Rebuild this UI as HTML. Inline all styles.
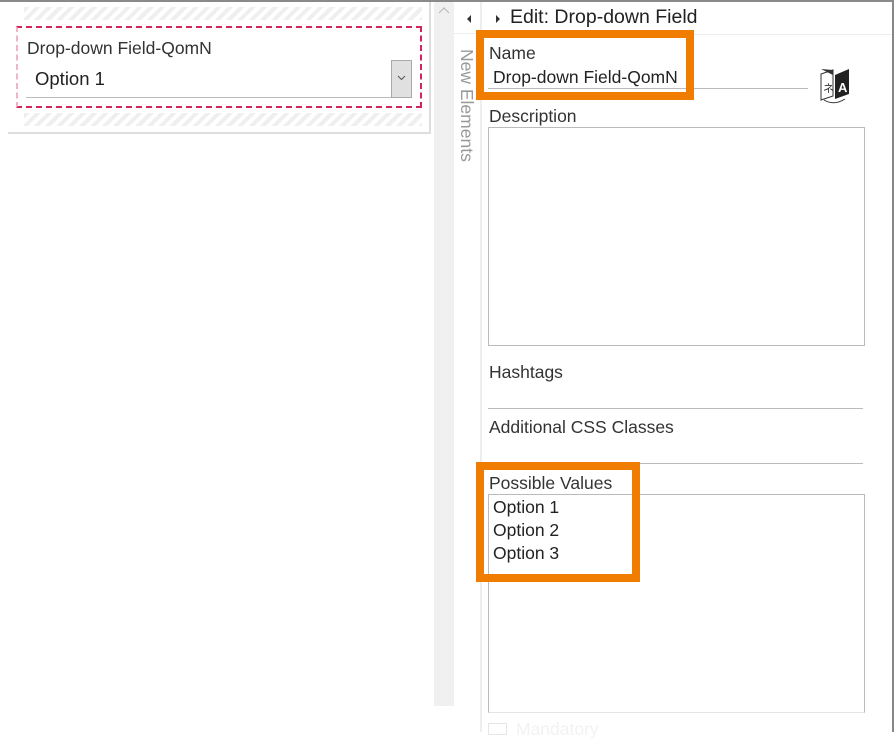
<!DOCTYPE html>
<html><head><meta charset="utf-8"><style>
*{margin:0;padding:0;box-sizing:border-box}
body{width:894px;height:732px;background:#fff;position:relative;overflow:hidden;font-family:"Liberation Sans",sans-serif;color:#333}
.a{position:absolute}
.stripe{background:repeating-linear-gradient(135deg,#efefef 0 4px,#fff 4px 8px)}
.lbl{font-size:17.5px;color:#333}
</style></head><body>
<div class="a" style="left:0;top:0;width:894px;height:2px;background:#8a8a8a"></div>
<!-- left panel -->
<div class="a" style="left:8px;top:2px;width:423px;height:132px;border-right:2px solid #ddd;border-bottom:2px solid #ddd"></div>
<div class="a stripe" style="left:24px;top:7px;width:398px;height:13px"></div>
<div class="a stripe" style="left:24px;top:113px;width:398px;height:13px"></div>
<div class="a" style="left:16px;top:26px;width:406px;height:82px;border:2px dashed #d3255a;border-left-color:#f0b6c6"></div>
<div class="a lbl" style="left:27px;top:38px">Drop-down Field-QomN</div>
<div class="a" style="left:35px;top:68px;font-size:18.5px;color:#222">Option 1</div>
<div class="a" style="left:26px;top:97px;width:386px;height:1px;background:#bbb"></div>
<div class="a" style="left:391px;top:60px;width:21px;height:38px;background:#e0e0e0;border:1px solid #aaa"></div>
<svg class="a" style="left:396px;top:74px" width="11" height="8"><path d="M2 2 L5.5 5.5 L9 2" fill="none" stroke="#555" stroke-width="1"/></svg>
<!-- scroll column -->
<div class="a" style="left:434px;top:2px;width:20px;height:704px;background:#f0f0f0"></div>
<svg class="a" style="left:438px;top:6px" width="12" height="8"><path d="M1 7 L6 2 L11 7" fill="none" stroke="#bbb" stroke-width="1.2"/></svg>
<div class="a" style="left:454px;top:2px;width:27px;height:32px;border-bottom:1px solid #eee"></div>
<svg class="a" style="left:466px;top:14px" width="6" height="10"><path d="M5 1 L1 5 L5 9Z" fill="#333"/></svg>
<div class="a" style="left:458px;top:49px;transform-origin:0 0;transform:rotate(90deg) translate(0,-19px);font-size:17.5px;color:#999;white-space:nowrap">New Elements</div>
<div class="a" style="left:480px;top:2px;width:2px;height:730px;background:#eee"></div>
<div class="a" style="left:892px;top:2px;width:2px;height:730px;background:#888"></div>
<!-- right panel -->
<div class="a" style="left:482px;top:34px;width:410px;height:1px;background:#eee"></div>
<svg class="a" style="left:495px;top:14px" width="6" height="10"><path d="M1 1 L5 5 L1 9Z" fill="#333"/></svg>
<div class="a" style="left:510px;top:6px;font-size:19.5px;color:#222">Edit: Drop-down Field</div>
<div class="a lbl" style="left:489px;top:43px">Name</div>
<div class="a" style="left:493px;top:67px;font-size:17.5px;color:#222">Drop-down Field-QomN</div>
<div class="a" style="left:488px;top:88px;width:320px;height:1px;background:#bbb"></div>
<svg class="a" style="left:818px;top:66px" width="34" height="38" viewBox="0 0 34 38">
<path d="M3 8 L15 4 L15 30 L3 34Z" fill="#fff" stroke="#333" stroke-width="1"/>
<path d="M3 3 L15 9 L15 4Z" fill="#333"/>
<path d="M17 9 L31 3 L31 28 L17 33Z" fill="#222"/>
<text x="20" y="26" font-family="Liberation Sans" font-weight="bold" font-size="13" fill="#fff">A</text>
<text x="5" y="26" font-size="11" fill="#333" font-family="Noto Sans CJK JP,sans-serif">ネ</text>
<path d="M6 34 Q16 40 27 33" fill="none" stroke="#333" stroke-width="1"/>
</svg>
<div class="a lbl" style="left:489px;top:106px">Description</div>
<div class="a" style="left:488px;top:127px;width:377px;height:219px;border:1px solid #bbb"></div>
<div class="a lbl" style="left:489px;top:362px">Hashtags</div>
<div class="a" style="left:488px;top:408px;width:375px;height:1px;background:#bbb"></div>
<div class="a lbl" style="left:489px;top:417px">Additional CSS Classes</div>
<div class="a" style="left:488px;top:463px;width:375px;height:1px;background:#bbb"></div>
<div class="a lbl" style="left:489px;top:473px">Possible Values</div>
<div class="a" style="left:488px;top:494px;width:377px;height:219px;border:1px solid #bbb;border-bottom-color:#e5e5e5"></div>
<div class="a" style="left:493px;top:496px;font-size:17.5px;color:#222;line-height:23px">Option 1<br>Option 2<br>Option 3</div>
<div class="a" style="left:488px;top:723px;width:19px;height:12px;border:1px solid #e5e5e5"></div>
<div class="a" style="left:516px;top:719px;font-size:17.5px;color:#f2f2f2">Mandatory</div>
<!-- orange highlights -->
<div class="a" style="left:476px;top:30px;width:218px;height:70px;border:8px solid #f07d00"></div>
<div class="a" style="left:476px;top:462px;width:164px;height:120px;border:8px solid #f07d00"></div>
</body></html>
